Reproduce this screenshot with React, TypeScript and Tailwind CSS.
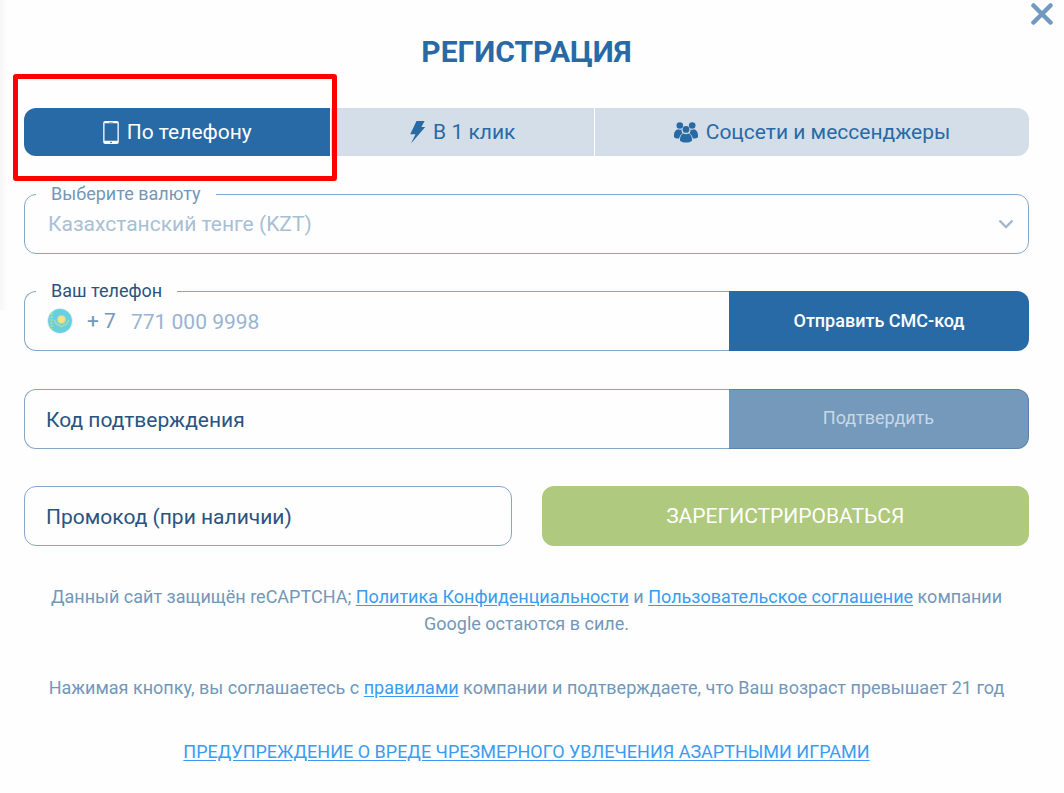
import React, { useState } from "react";

const PhoneIcon = () => (
  <svg viewBox="0 0 16 23" className="h-[23px] w-4 shrink-0" aria-hidden="true">
    <path
      fill="currentColor"
      fillRule="evenodd"
      d="M2.2 0h11.600A2 2 0 0 1 15.800 2v19a2 2 0 0 1-2 2H2.200A2 2 0 0 1 .2 21V2A2 2 0 0 1 2.200 0ZM1.500 2.200v17.600h13V2.200ZM7.200 20.700v1.200h1.600v-1.200ZM6 .9v.6h4V.9Z"
    />
  </svg>
);

const BoltIcon = () => (
  <svg viewBox="0 0 15 23" className="h-[23px] w-[15px] shrink-0" aria-hidden="true">
    <path fill="currentColor" d="M6.500 0h8.100L11.400 6.100h3.700L1 22.600l4.500-9.400H.2Z" />
  </svg>
);

const PeopleIcon = () => (
  <svg viewBox="0 0 24 21" className="h-[21px] w-6 shrink-0" aria-hidden="true">
    <g fill="currentColor">
      <circle cx="5.800" cy="3.500" r="3.300" />
      <circle cx="18.200" cy="3.500" r="3.300" />
      <path d="M0 13.500C0 10 1.800 7.600 4.200 7.300c1.200.6 2.300.6 3.400.3-.2 1.800.2 2.900 1 3.900-2 1.100-3.100 2.700-3.400 5C2.500 16.600.9 15.900 0 14.900Z" />
      <path d="M24 13.500c0-3.500-1.800-5.900-4.200-6.200-1.200.6-2.300.6-3.400.3.2 1.800-.2 2.900-1 3.900 2 1.100 3.100 2.700 3.400 5 2.700.1 4.300-.6 5.200-1.600Z" />
      <circle cx="12" cy="7.400" r="3.400" />
      <path d="M6 17.800c0-3.600 1.500-5.700 3.800-6.200 1.500.7 2.900.7 4.400 0 2.300.5 3.800 2.600 3.800 6.200v.9c-1.400 1.300-3.500 1.900-6 1.900s-4.600-.6-6-1.900Z" />
    </g>
  </svg>
);

const KazakhstanFlag = () => (
  <svg viewBox="0 0 26 26" className="h-[26px] w-[26px] shrink-0" role="img" aria-label="Казахстан">
    <circle cx="13" cy="13" r="12.900" fill="#dff0f4" />
    <circle cx="13" cy="13" r="11.900" fill="#66cfe0" />
    <path d="M4.500 5v16" stroke="#a9d9a6" strokeWidth="2.400" strokeDasharray="2 1" />
    <circle cx="14.500" cy="11.500" r="4.600" fill="#a6dcb4" />
    <circle cx="14.500" cy="11.500" r="3.400" fill="#fbe183" />
    <path
      d="M7.500 12c.6 3 2.700 4.800 5.100 5.300l1.900 1.500 1.900-1.500c2.400-.5 4.500-2.300 5.100-5.300"
      fill="none"
      stroke="#a9dbaa"
      strokeWidth="1.500"
    />
  </svg>
);

const tabs = [
  { id: "phone", label: "По телефону", Icon: PhoneIcon },
  { id: "click", label: "В 1 клик", Icon: BoltIcon },
  { id: "social", label: "Соцсети и мессенджеры", Icon: PeopleIcon },
];

const fieldBorder = "border border-[#86a6c6]";
const linkStyle = "text-[#3a9cf0] underline underline-offset-2";

export default function App() {
  const [active, setActive] = useState("phone");

  return (
    <main className="relative min-h-screen bg-[#fefefe] pr-[35px] pb-6 pl-6 font-['Roboto',sans-serif] text-[#7397b9]">
      <div className="absolute top-0 left-0 h-[310px] w-2 bg-linear-to-r from-[#f6f6f6] to-[#fefefe]" />
      <button type="button" aria-label="Закрыть" className="absolute top-0 right-[7px] p-[3px] text-[#7299c0]">
        <svg viewBox="0 0 24 22" className="h-[22px] w-6" aria-hidden="true">
          <path d="M3.500 2.500 20.500 19.500M20.500 2.500 3.500 19.500" stroke="currentColor" strokeWidth="4.500" strokeLinecap="round" />
        </svg>
      </button>

      <h1 className="pt-8 text-center text-[30px] leading-10 font-bold text-[#286aa6]">РЕГИСТРАЦИЯ</h1>

      <div role="tablist" className="mt-9 flex gap-px">
        {tabs.map(({ id, label, Icon }) => (
          <div key={id} className="group relative flex flex-auto">
            <button
              type="button"
              role="tab"
              aria-selected={active === id}
              onClick={() => setActive(id)}
              className="flex h-12 flex-auto items-center justify-center gap-2 bg-[#d4dee8] px-4 text-[21px] whitespace-nowrap text-[#286aa6] group-first:rounded-l-xl group-last:rounded-r-xl aria-selected:bg-[#286aa6] aria-selected:text-white"
            >
              <Icon />
              <span className="pt-0.5">{label}</span>
            </button>
            {id === "phone" && (
              <div className="pointer-events-none absolute -top-[34px] -right-[7px] -bottom-[25px] -left-[11px] z-10 rounded-[3px] border-5 border-[#fd0000]" />
            )}
          </div>
        ))}
      </div>

      <form onSubmit={(e) => e.preventDefault()}>
        <fieldset className={`mt-7 h-[70px] rounded-xl ${fieldBorder}`}>
          <legend className="ml-[11px] px-[15px] text-lg leading-5">
            <label htmlFor="currency">Выберите валюту</label>
          </legend>
          <div className="relative">
            <select
              id="currency"
              className="h-10 w-full appearance-none bg-transparent pt-0.5 pr-12 pl-[23px] text-[21px] text-[#a9bfd3] outline-none"
            >
              <option>Казахстанский тенге (KZT)</option>
            </select>
            <svg viewBox="0 0 16 10" className="pointer-events-none absolute top-[15px] right-[14px] h-[10px] w-4" aria-hidden="true">
              <path d="M1.500 1.500 8 8l6.500-6.500" fill="none" stroke="#a3b7cb" strokeWidth="2.400" />
            </svg>
          </div>
        </fieldset>

        <div className="mt-[27px] flex items-end">
          <fieldset className={`h-[70px] min-w-0 flex-1 rounded-l-xl border-r-0! ${fieldBorder}`}>
            <legend className="ml-[11px] px-[15px] text-lg leading-5 text-[#2b5380]">
              <label htmlFor="phone">Ваш телефон</label>
            </legend>
            <div className="flex h-10 items-center pl-[22px]">
              <KazakhstanFlag />
              <span className="ml-[14px] pt-0.5 text-[21px]">+ 7</span>
              <input
                id="phone"
                type="tel"
                placeholder="771 000 9998"
                className="ml-[15px] min-w-0 flex-1 bg-transparent pt-1 text-[21px] outline-none placeholder:text-[#98b4d2]"
              />
            </div>
          </fieldset>
          <button type="button" className="h-[60px] w-[300px] rounded-r-xl bg-[#286aa6] text-lg font-medium text-white">
            Отправить СМС-код
          </button>
        </div>

        <div className="mt-[38px] flex">
          <input
            type="text"
            aria-label="Код подтверждения"
            placeholder="Код подтверждения"
            className={`h-[60px] min-w-0 flex-1 rounded-l-xl border-r-0! bg-transparent px-[21px] pt-0.5 text-[21px] outline-none placeholder:text-[#2b5380] ${fieldBorder}`}
          />
          <button
            type="button"
            disabled
            className="h-[60px] w-[300px] rounded-r-xl border border-l-0 border-[#5983ab] bg-[#7599ba] pb-0.5 text-lg text-[#c9d8e6]"
          >
            Подтвердить
          </button>
        </div>

        <div className="mt-[37px] grid grid-cols-2 gap-[30px]">
          <input
            type="text"
            aria-label="Промокод (при наличии)"
            placeholder="Промокод (при наличии)"
            className={`h-[60px] min-w-0 rounded-xl bg-transparent px-[21px] pt-0.5 text-[21px] outline-none placeholder:text-[#2b5380] ${fieldBorder}`}
          />
          <button type="submit" className="h-[60px] rounded-xl bg-[#afc97e] pt-0.5 text-[21px] text-white">
            ЗАРЕГИСТРИРОВАТЬСЯ
          </button>
        </div>
      </form>

      <div className="mt-[37px] flex flex-col gap-[37px] text-center text-lg leading-[27px]">
        <p className="px-5">
          Данный сайт защищён reCAPTCHA;{" "}
          <a href="#privacy" className={linkStyle}>
            Политика Конфиденциальности
          </a>{" "}
          и{" "}
          <a href="#terms" className={linkStyle}>
            Пользовательское соглашение
          </a>{" "}
          компании Google остаются в силе.
        </p>
        <p>
          Нажимая кнопку, вы соглашаетесь с{" "}
          <a href="#rules" className={linkStyle}>
            правилами
          </a>{" "}
          компании и подтверждаете, что Ваш возраст превышает 21 год
        </p>
        <p>
          <a href="#warning" className={linkStyle}>
            ПРЕДУПРЕЖДЕНИЕ О ВРЕДЕ ЧРЕЗМЕРНОГО УВЛЕЧЕНИЯ АЗАРТНЫМИ ИГРАМИ
          </a>
        </p>
      </div>
    </main>
  );
}
